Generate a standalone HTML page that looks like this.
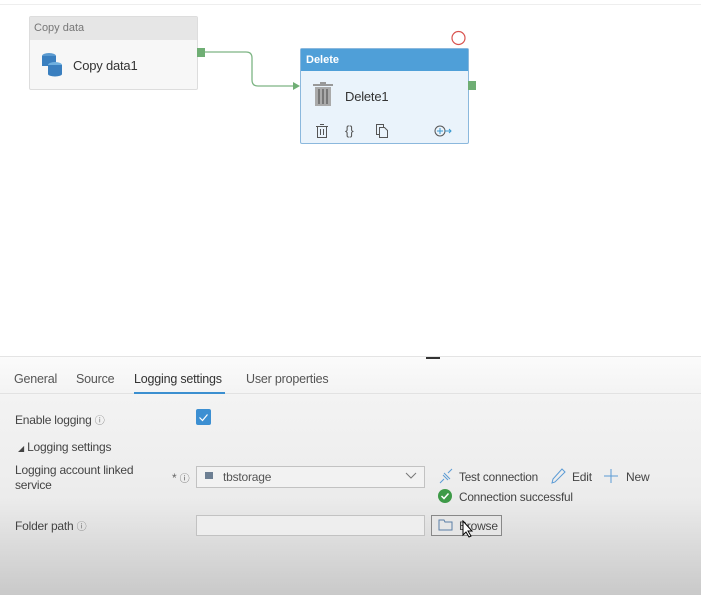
<!DOCTYPE html>
<html><head><style>
body{margin:0;width:701px;height:595px;position:relative;overflow:hidden;font-family:"Liberation Sans",sans-serif;background:#fff;color:#333}
.a{position:absolute}
.t{font-size:12px;color:#444;letter-spacing:-0.2px}
</style></head><body>
<div class="a" style="left:0;top:4px;width:701px;height:1px;background:#eee"></div>
<!-- copy data -->
<div class="a" style="left:29px;top:16px;width:167px;height:72px;border:1px solid #ddd;border-radius:2px;background:#f7f7f7">
 <div style="height:23px;background:#e6e6e6;font-size:11px;color:#777;line-height:23px;padding-left:4px">Copy data</div>
 <svg class="a" style="left:10px;top:34px" width="24" height="26"><ellipse cx="9" cy="5" rx="7" ry="3" fill="#5a9ad0"/><rect x="2" y="5" width="14" height="10" fill="#3a7fbf"/><ellipse cx="15" cy="14" rx="7" ry="3" fill="#6fb0e0"/><rect x="8" y="14" width="14" height="9" fill="#3a7fbf"/><ellipse cx="15" cy="23" rx="7" ry="2.5" fill="#3a7fbf"/></svg>
 <div class="a t" style="left:43px;top:41px;font-size:13px;color:#333">Copy data1</div>
</div>
<div class="a" style="left:197px;top:48px;width:8px;height:9px;background:#6fae74"></div>
<svg class="a" style="left:0;top:0" width="701" height="150"><path d="M205 52 H246 Q252 52 252 58 V80 Q252 86 258 86 H293" fill="none" stroke="#7db584" stroke-width="1.3"/><path d="M293 82 L300 86 L293 90Z" fill="#6fae74"/><circle cx="458.5" cy="38" r="6.5" fill="none" stroke="#d9534f" stroke-width="1.2"/></svg>
<!-- delete -->
<div class="a" style="left:300px;top:48px;width:167px;height:94px;border:1px solid #8bb8dd;border-radius:2px;background:#eaf3fb">
 <div style="height:22px;background:#4f9fd8;color:#fff;font-size:11px;font-weight:bold;line-height:22px;padding-left:5px">Delete</div>
 <svg class="a" style="left:12px;top:33px" width="20" height="25"><rect x="0" y="2" width="20" height="2" fill="#999"/><rect x="7" y="0" width="6" height="2" fill="#999"/><rect x="2" y="5" width="16" height="19" fill="#aaa"/><rect x="5" y="7" width="2" height="15" fill="#777"/><rect x="9" y="7" width="2" height="15" fill="#777"/><rect x="13" y="7" width="2" height="15" fill="#777"/></svg>
 <div class="a t" style="left:44px;top:40px;font-size:13px;color:#333">Delete1</div>
 <svg class="a" style="left:15px;top:74px" width="140" height="16" fill="none" stroke="#555" stroke-width="1"><rect x="1.5" y="3.5" width="9" height="11"/><path d="M0 3.5H12M4 1.5H8M4.5 6v6M7.5 6v6"/><text x="29" y="12" font-size="13" fill="#555" stroke="none" font-family="Liberation Sans">{}</text><rect x="60.5" y="1.5" width="7" height="10"/><path d="M63.5 4.5h5l3 3v7h-8z" fill="#eaf3fb"/><circle cx="124" cy="8" r="5"/><path d="M121 8h6M124 5v6M129 8h6M133 6l2 2-2 2" stroke="#3a9ad0"/></svg>
</div>
<div class="a" style="left:468px;top:81px;width:8px;height:9px;background:#6fae74"></div>
<!-- panel -->
<div class="a" style="left:0;top:357px;width:701px;height:238px;background:linear-gradient(#fbfbfb 0,#f3f3f3 40px,#ececec 140px,#c9c9c9 238px)"></div>
<div class="a" style="left:0;top:356px;width:701px;height:1px;background:#e4e4e4"></div>
<div class="a" style="left:426px;top:357px;width:14px;height:2px;background:#333"></div>
<div class="a" style="left:0;top:393px;width:701px;height:1px;background:#e2e2e2"></div>
<div class="a t" style="left:14px;top:372px;font-size:12.5px;color:#555">General</div>
<div class="a t" style="left:76px;top:372px;font-size:12.5px;color:#555">Source</div>
<div class="a t" style="left:134px;top:372px;font-size:12.5px;color:#333">Logging settings</div>
<div class="a" style="left:134px;top:392px;width:91px;height:2px;background:#3b8fd0"></div>
<div class="a t" style="left:246px;top:372px;font-size:12.5px;color:#555">User properties</div>
<div class="a t" style="left:15px;top:412px">Enable logging <span style="font-size:10px;color:#777">ⓘ</span></div>
<div class="a" style="left:196px;top:409px;width:15px;height:16px;background:#3c8fd2;border-radius:2px"><svg width="15" height="16"><path d="M3.5 8.5l3 3 5-6" stroke="#fff" fill="none" stroke-width="1.2"/></svg></div>
<div class="a t" style="left:18px;top:440px"><span style="font-size:8px">◢</span> Logging settings</div>
<div class="a t" style="left:15px;top:463px;line-height:15px">Logging account linked<br>service</div>
<div class="a t" style="left:172px;top:470px;color:#666">* <span style="font-size:10px">ⓘ</span></div>
<div class="a" style="left:196px;top:466px;width:227px;height:20px;border:1px solid #c2c2c2;background:#f2f2f2"></div>
<div class="a" style="left:205px;top:472px;width:8px;height:7px;background:#6d7f93"></div>
<div class="a t" style="left:223px;top:470px;color:#555">tbstorage</div>
<svg class="a" style="left:405px;top:472px" width="12" height="8"><path d="M1 1l5 5 5-5" stroke="#777" fill="none"/></svg>
<svg class="a" style="left:438px;top:467px" width="16" height="18"><path d="M2 16l4-4M10 6l4-4M5 8l5 5M6 6l6 6" stroke="#5b9bd5" fill="none"/></svg>
<div class="a t" style="left:459px;top:470px;font-size:11.8px">Test connection</div>
<svg class="a" style="left:550px;top:467px" width="16" height="18"><path d="M2 16l1-4 9-10 3 3-10 10z" stroke="#5b9bd5" fill="none"/></svg>
<div class="a t" style="left:572px;top:470px">Edit</div>
<svg class="a" style="left:603px;top:468px" width="16" height="16"><path d="M8 1v14M1 8h14" stroke="#5b9bd5"/></svg>
<div class="a t" style="left:626px;top:470px">New</div>
<svg class="a" style="left:438px;top:488px" width="16" height="16"><circle cx="7" cy="8" r="7" fill="#3e9a48"/><path d="M3.5 8l2.5 2.5 4.5-5" stroke="#fff" fill="none" stroke-width="1.5"/></svg>
<div class="a t" style="left:459px;top:490px;font-size:11.8px">Connection successful</div>
<div class="a t" style="left:15px;top:518px">Folder path <span style="font-size:10px;color:#777">ⓘ</span></div>
<div class="a" style="left:196px;top:515px;width:227px;height:19px;border:1px solid #c2c2c2;background:#eeeeee"></div>
<div class="a" style="left:431px;top:515px;width:69px;height:19px;border:1px solid #888;background:#e6e6e6"></div>
<svg class="a" style="left:438px;top:518px" width="16" height="13"><path d="M1 2h5l1 2h7v8H1z" stroke="#5b7fa6" fill="none"/></svg>
<div class="a t" style="left:459px;top:519px">Browse</div>
<svg class="a" style="left:462px;top:520px" width="12" height="18"><path d="M1 1v14l3-3 3 5 2-1-3-5h4z" fill="#fff" stroke="#000"/></svg>
</body></html>
